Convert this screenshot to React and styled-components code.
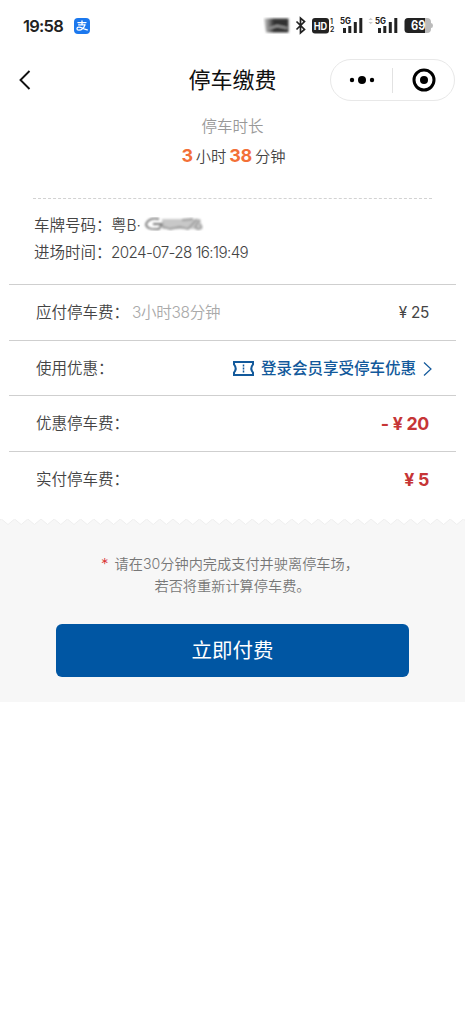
import React from 'react';
import styled, { createGlobalStyle } from 'styled-components';

const GlobalStyle = createGlobalStyle`
  * { box-sizing: border-box; }
  body {
    margin: 0;
    background: #fff;
    color: #444;
    font-family: Inter, "Noto Sans CJK SC", sans-serif;
    font-weight: 350;
  }
`;

const Page = styled.div`
  width: 465px;
  height: 1024px;
  overflow: hidden;
  background: #fff;
`;

const StatusBar = styled.div`
  display: flex;
  align-items: center;
  justify-content: space-between;
  height: 52px;
  padding: 0 32px 0 23px;
`;

const StatusGroup = styled.div`
  display: flex;
  align-items: center;
`;

const Clock = styled.span`
  font: 600 16.5px/20px Inter, sans-serif;
  letter-spacing: -0.75px;
  color: #222;
  width: 51px;
`;

const NavBar = styled.header`
  display: grid;
  grid-template-columns: 131px 1fr 139px;
  align-items: center;
  height: 56px;
  padding: 0 10px 0 18px;
`;

const NavTitle = styled.h1`
  margin: 0;
  text-align: center;
  font-size: 22px;
  line-height: 30px;
  font-weight: 400;
  color: #111;
  white-space: nowrap;
`;

const Capsule = styled.div`
  display: flex;
  align-items: center;
  justify-self: end;
  width: 125px;
  height: 42px;
  border: 1px solid #e8e8e8;
  border-radius: 21px;
`;

const CapsuleHalf = styled.div`
  flex: 1;
  display: flex;
  align-items: center;
  justify-content: center;
  height: 25px;
  & + & { border-left: 1px solid #e2e2e2; }
`;

const Duration = styled.section`
  text-align: center;
  height: 90px;
  padding-top: 8px;
`;

const DurationLabel = styled.div`
  font-size: 15.5px;
  line-height: 22px;
  color: #999;
`;

const DurationValue = styled.div`
  display: flex;
  align-items: baseline;
  justify-content: center;
  gap: 3px;
  margin: 5px 0 0 2px;
  font-size: 15.3px;
  line-height: 26px;
  color: #444;
  b {
    font-size: 18px;
    font-weight: 700;
    letter-spacing: -0.4px;
    color: #f37037;
  }
`;

const Vehicle = styled.section`
  margin: 0 33px;
  height: 86px;
  padding-top: 13px;
  border-top: 1px dashed #d2d2d2;
`;

const VehicleRow = styled.div`
  display: flex;
  align-items: baseline;
  height: 27px;
  padding-left: 1px;
  font-size: 15.5px;
  line-height: 28px;
  white-space: nowrap;
  svg { margin: 2px 0 0 1px; align-self: flex-start; }
`;

const VehicleLabel = styled.span`
  width: 77px;
`;

const EntryTime = styled.span`
  font-size: 15.2px;
  letter-spacing: -0.6px;
`;

const FeeList = styled.section`
  margin: 0 9px;
`;

const FeeRow = styled.div`
  display: flex;
  align-items: center;
  height: 55.6px;
  padding: 2px 27px 0;
  border-top: 1.5px solid #cfcfcf;
  font-size: 15.5px;
  line-height: 22px;
  white-space: nowrap;
`;

const FeeNote = styled.span`
  margin-left: 3px;
  letter-spacing: -0.3px;
  color: #aaa;
`;

const Amount = styled.span`
  margin-left: auto;
  font-size: ${(p) => (p.$strong ? '17.8px' : '15.3px')};
  font-weight: ${(p) => (p.$strong ? 700 : 400)};
  letter-spacing: -0.3px;
  color: ${(p) => (p.$strong ? '#c63536' : '#444')};
`;

const MemberLink = styled.a`
  display: flex;
  align-items: center;
  margin-left: auto;
  margin-right: -3px;
  font-weight: 500;
  color: #12599b;
  svg:first-child { margin-right: 7px; }
  svg:last-child { margin-left: 7px; }
`;

const Footer = styled.footer`
  margin-top: 12.6px;
  height: 183px;
  background: #f7f7f7;
`;

const Zigzag = styled.svg`
  display: block;
`;

const Notice = styled.p`
  margin: 26px 0 0;
  text-align: center;
  font-size: 14.2px;
  line-height: 22px;
  color: #777;
`;

const NoticeLine = styled.span`
  display: block;
  margin-left: ${(p) => p.$shift || 0}px;
`;

const Star = styled.span`
  margin-right: 6px;
  font-size: 15px;
  line-height: 1;
  color: #d92d2d;
`;

const PayButton = styled.button`
  display: block;
  width: 353px;
  height: 53px;
  margin: 27px auto 0 56px;
  padding: 0 0 2px;
  border: 0;
  border-radius: 6px;
  background: #0056a3;
  color: #fff;
  font: 400 20.5px/51px "Noto Sans CJK SC", sans-serif;
`;

const AlipayIcon = () => (
  <svg width="16" height="16" viewBox="0 0 16 16">
    <rect width="16" height="16" rx="4" fill="#1b78ee" />
    <g fill="none" stroke="#fff" strokeLinecap="round">
      <path d="M3.9 4.6h8.1M8 2.8v4M4.6 6.8h6.3" strokeWidth="1.3" />
      <path d="M10.9 6.9c-1 3.1-3.6 5.3-6 5.3-2.6 0-2.6-3 0-3 2.3 0 4.6 1.7 8.4 2.7" strokeWidth="1.3" />
    </g>
  </svg>
);

const SystemIcons = () => (
  <svg width="170" height="24" viewBox="263 14 170 24">
    <defs>
      <filter id="smudge"><feGaussianBlur stdDeviation="1" /></filter>
      <linearGradient id="fade">
        <stop offset="0" stopColor="#ccc" />
        <stop offset="0.4" stopColor="#333" />
      </linearGradient>
    </defs>
    <g filter="url(#smudge)">
      <path d="M264 18.5h24.5v14H266z" fill="url(#fade)" />
      <path d="M269 28.5l8-2.5 10 2" stroke="#999" strokeWidth="2.2" fill="none" />
    </g>
    <path d="M296.5 21.5l8 8-4 3.5V18l4 3.5-8 8" fill="none" stroke="#222" strokeWidth="1.7" />
    <rect x="312" y="18" width="17" height="15.5" rx="3" fill="#222" />
    <text x="320.5" y="29.6" textAnchor="middle" fontFamily="Inter" fontWeight="700" fontSize="10.5" textLength="13.5" lengthAdjust="spacingAndGlyphs" fill="#fff">HD</text>
    <text x="330" y="24.3" fontFamily="Inter" fontWeight="600" fontSize="7" fill="#222">1</text>
    <text x="330" y="32.3" fontFamily="Inter" fontWeight="600" fontSize="7" fill="#222">2</text>
    <text x="340" y="24" fontFamily="Inter" fontWeight="700" fontSize="8.5" fill="#222" textLength="11" lengthAdjust="spacingAndGlyphs">5G</text>
    <path d="M343 28h3v5h-3zM348.3 26h3v7h-3zM353.8 22h3v11h-3zM359.3 18h3v15h-3z" fill="#222" />
    <path d="M368.5 20l2.2-2.2 2.2 2.2zM368.5 22l2.2 2.2 2.2-2.2z" fill="#ccc" />
    <text x="375" y="24" fontFamily="Inter" fontWeight="700" fontSize="8.5" fill="#222" textLength="11" lengthAdjust="spacingAndGlyphs">5G</text>
    <path d="M378 28h3v5h-3zM383.3 26h3v7h-3zM388.8 22h3v11h-3zM394.3 18h3v15h-3z" fill="#222" />
    <path d="M424 18h3q4 0 4 4v1q2 0 2 2.5t-2 2.5v1q0 4-4 4h-3z" fill="#bbb" />
    <path d="M408 18h17v15h-17q-3.5 0-3.5-3.5v-8q0-3.5 3.5-3.5z" fill="#222" />
    <text x="411" y="30" fontFamily="Inter" fontWeight="700" fontSize="12.5" fill="#fff" textLength="14.5" lengthAdjust="spacingAndGlyphs">69</text>
  </svg>
);

const TicketIcon = () => (
  <svg width="21" height="15" viewBox="0 0 21 15">
    <path d="M1 1h19v2.3q-3.4 4.2 0 8.4V14H1v-2.3q3.4-4.2 0-8.4z" fill="none" stroke="#12599b" strokeWidth="2" />
    <path d="M10.5 3.5v8.5" stroke="#12599b" strokeWidth="1.5" strokeDasharray="2 1" />
  </svg>
);

const PlateSmudge = () => (
  <svg width="62" height="20" viewBox="0 0 62 20">
    <defs>
      <filter id="plate"><feGaussianBlur stdDeviation="0.9" /></filter>
    </defs>
    <g filter="url(#plate)" fill="none">
      <path d="M20 5h38l2 10H20z" fill="#c8c8c8" />
      <path d="M17 5q-10-2-13 5 0 6 13 5l3-5H11" stroke="#777" strokeWidth="1.8" />
      <path d="M19 12l9 3 10-2 8 2 9-10M40 6l11-1M58 6q-8 9-2 9t2-5" stroke="#999" strokeWidth="1.8" />
    </g>
  </svg>
);

// teeth of the torn ticket edge, 13.2px apart
const teeth = Array.from({ length: 37 }, (_, i) => `L${(i * 13.2 + 8).toFixed(1)} 5.5L${(i * 13.2 + 14.6).toFixed(1)} 0`).join('');

export default function App() {
  return (
    <Page lang="zh-CN">
      <GlobalStyle />
      <StatusBar>
        <StatusGroup>
          <Clock>19:58</Clock>
          <AlipayIcon />
        </StatusGroup>
        <SystemIcons />
      </StatusBar>
      <NavBar>
        <svg width="14" height="22" viewBox="0 0 14 22">
          <path d="M11.5 2L2.5 11l9 9" fill="none" stroke="#111" strokeWidth="1.9" />
        </svg>
        <NavTitle>停车缴费</NavTitle>
        <Capsule>
          <CapsuleHalf>
            <svg width="26" height="10" viewBox="0 0 26 10">
              <circle cx="3" cy="5" r="2.2" />
              <circle cx="13" cy="5" r="4" />
              <circle cx="23" cy="5" r="2.2" />
            </svg>
          </CapsuleHalf>
          <CapsuleHalf>
            <svg width="24" height="24" viewBox="0 0 24 24">
              <circle cx="12" cy="12" r="10" fill="none" stroke="#000" strokeWidth="3" />
              <circle cx="12" cy="12" r="4" />
            </svg>
          </CapsuleHalf>
        </Capsule>
      </NavBar>
      <Duration>
        <DurationLabel>停车时长</DurationLabel>
        <DurationValue>
          <b>3</b><span>小时</span><b>38</b><span>分钟</span>
        </DurationValue>
      </Duration>
      <Vehicle>
        <VehicleRow>
          <VehicleLabel>车牌号码：</VehicleLabel>粤B·<PlateSmudge />
        </VehicleRow>
        <VehicleRow>
          <VehicleLabel>进场时间：</VehicleLabel>
          <EntryTime>2024-07-28 16:19:49</EntryTime>
        </VehicleRow>
      </Vehicle>
      <FeeList>
        <FeeRow>
          应付停车费：<FeeNote>3小时38分钟</FeeNote>
          <Amount>¥ 25</Amount>
        </FeeRow>
        <FeeRow>
          使用优惠：
          <MemberLink>
            <TicketIcon />
            登录会员享受停车优惠
            <svg width="9" height="16" viewBox="0 0 9 16">
              <path d="M1 1.5l7 6.5-7 6.5" fill="none" stroke="#12599b" strokeWidth="1.2" />
            </svg>
          </MemberLink>
        </FeeRow>
        <FeeRow>
          优惠停车费：
          <Amount $strong>- ¥ 20</Amount>
        </FeeRow>
        <FeeRow>
          实付停车费：
          <Amount $strong>¥ 5</Amount>
        </FeeRow>
      </FeeList>
      <Footer>
        <Zigzag width="465" height="8" viewBox="0 0 465 8">
          <path d={`M0 0H1.4${teeth}V0Z`} fill="#fff" />
          <path d={`M-5 5.5L1.4 0${teeth}`} fill="none" stroke="#eee" strokeWidth="1" />
        </Zigzag>
        <Notice>
          <NoticeLine $shift={-5}><Star>*</Star>请在30分钟内完成支付并驶离停车场，</NoticeLine>
          <NoticeLine>若否将重新计算停车费。</NoticeLine>
        </Notice>
        <PayButton>立即付费</PayButton>
      </Footer>
    </Page>
  );
}
